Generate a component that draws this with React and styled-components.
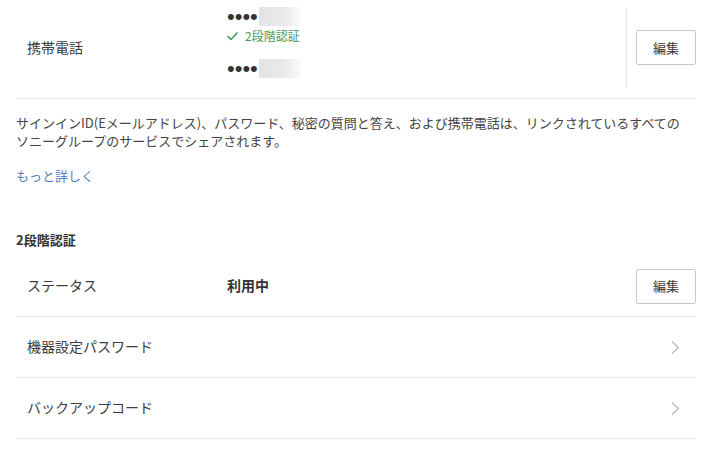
import React from "react";
import styled, { createGlobalStyle } from "styled-components";

const Global = createGlobalStyle`
  html, body { margin: 0; padding: 0; background: #fff; }
  body {
    font-family: "Noto Sans CJK JP", "Noto Sans", sans-serif;
    color: #3a3a3a;
    -webkit-font-smoothing: antialiased;
  }
`;

const Page = styled.div`
  width: 680px;
  margin-left: 16px;
`;

const InfoRow = styled.div`
  display: grid;
  grid-template-columns: 211px 1fr 70px;
  align-items: center;
  height: 95px;
  padding-bottom: 3px;
  border-bottom: 1px solid #e6e6e6;
`;

const RowLabel = styled.div`
  padding-left: 11px;
  padding-bottom: 2px;
  font-size: 14px;
  line-height: 20px;
  color: #3c3c3c;
`;

const PhoneStack = styled.div`
  align-self: start;
  padding-top: 7px;
  display: flex;
  flex-direction: column;
`;

const MaskedValue = styled.div`
  display: flex;
  align-items: center;
  height: 19px;
  margin-top: ${(p) => (p.$spaced ? "13px" : "0")};
`;

const Dots = styled.span`
  font-family: "Liberation Sans", sans-serif;
  font-size: 22px;
  line-height: 19px;
  letter-spacing: 0;
  color: #333;
  width: 32px;
`;

const Blur = styled.span`
  display: block;
  width: 44px;
  height: 19px;
  background: linear-gradient(to right, #e3e3e3 0%, #e9e9e9 55%, #f8f8f8 90%, #ffffff 100%);
  filter: blur(0.6px);
`;

const Verified = styled.div`
  display: flex;
  align-items: center;
  gap: 7px;
  height: 20px;
  font-size: 12px;
  line-height: 20px;
  color: #47995a;
`;

const ActionCell = styled.div`
  display: flex;
  align-items: center;
  justify-content: flex-end;
  height: ${(p) => (p.$divided ? "80px" : "auto")};
  border-left: ${(p) => (p.$divided ? "1px solid #e6e6e6" : "none")};
  padding-right: ${(p) => (p.$chevron ? "16px" : "0")};
`;

const EditButton = styled.button`
  width: 60px;
  height: 35px;
  background: #fff;
  border: 1px solid #c9c9c9;
  border-radius: 2px;
  font-family: "Noto Sans CJK JP", "Noto Sans", sans-serif;
  font-size: 13px;
  color: #3a3a3a;
  padding: 0 0 1px;
  cursor: pointer;
`;

const Notice = styled.p`
  margin: 15px 0 0;
  max-width: 672px;
  font-size: 13px;
  line-height: 18px;
  color: #444;
`;

const MoreLink = styled.a`
  display: block;
  width: fit-content;
  margin-top: 17px;
  font-size: 13px;
  line-height: 18px;
  color: #5a80c4;
  text-decoration: none;
`;

const SectionTitle = styled.h3`
  margin: 46px 0 7px;
  font-size: 13px;
  line-height: 18px;
  font-weight: 700;
  color: #333;
`;

const ListRow = styled.div`
  display: grid;
  grid-template-columns: 211px 1fr auto;
  align-items: center;
  height: 60px;
  border-bottom: 1px solid #e6e6e6;
`;

const ListValue = styled.div`
  font-size: 14px;
  line-height: 20px;
  padding-bottom: 2px;
  font-weight: 700;
  color: #333;
`;

const Check = () => (
  <svg width="11" height="9" viewBox="0 0 11 9" fill="none">
    <polyline points="1,4.5 4,7.5 10,1" stroke="#47995a" strokeWidth="1.6" strokeLinecap="round" strokeLinejoin="round" />
  </svg>
);

const Chevron = () => (
  <svg width="9" height="13" viewBox="0 0 9 13" fill="none">
    <polyline points="1.5,1 7.5,6.5 1.5,12" stroke="#bababa" strokeWidth="1.4" strokeLinecap="round" strokeLinejoin="round" />
  </svg>
);

const rows = [
  { label: "ステータス", value: "利用中", action: "edit" },
  { label: "機器設定パスワード", action: "chevron" },
  { label: "バックアップコード", action: "chevron" },
];

export default function App() {
  return (
    <>
      <Global />
      <Page>
        <InfoRow>
          <RowLabel>携帯電話</RowLabel>
          <PhoneStack>
            <MaskedValue>
              <Dots>••••</Dots>
              <Blur />
            </MaskedValue>
            <Verified>
              <Check />
              2段階認証
            </Verified>
            <MaskedValue $spaced>
              <Dots>••••</Dots>
              <Blur />
            </MaskedValue>
          </PhoneStack>
          <ActionCell $divided>
            <EditButton>編集</EditButton>
          </ActionCell>
        </InfoRow>

        <Notice>
          サインインID(Eメールアドレス)、パスワード、秘密の質問と答え、および携帯電話は、リンクされているすべてのソニーグループのサービスでシェアされます。
        </Notice>
        <MoreLink href="#">もっと詳しく</MoreLink>

        <SectionTitle>2段階認証</SectionTitle>
        <div>
          {rows.map((r) => (
            <ListRow key={r.label}>
              <RowLabel>{r.label}</RowLabel>
              <ListValue>{r.value || ""}</ListValue>
              <ActionCell $chevron={r.action === "chevron"}>
                {r.action === "edit" ? <EditButton>編集</EditButton> : <Chevron />}
              </ActionCell>
            </ListRow>
          ))}
        </div>
      </Page>
    </>
  );
}
